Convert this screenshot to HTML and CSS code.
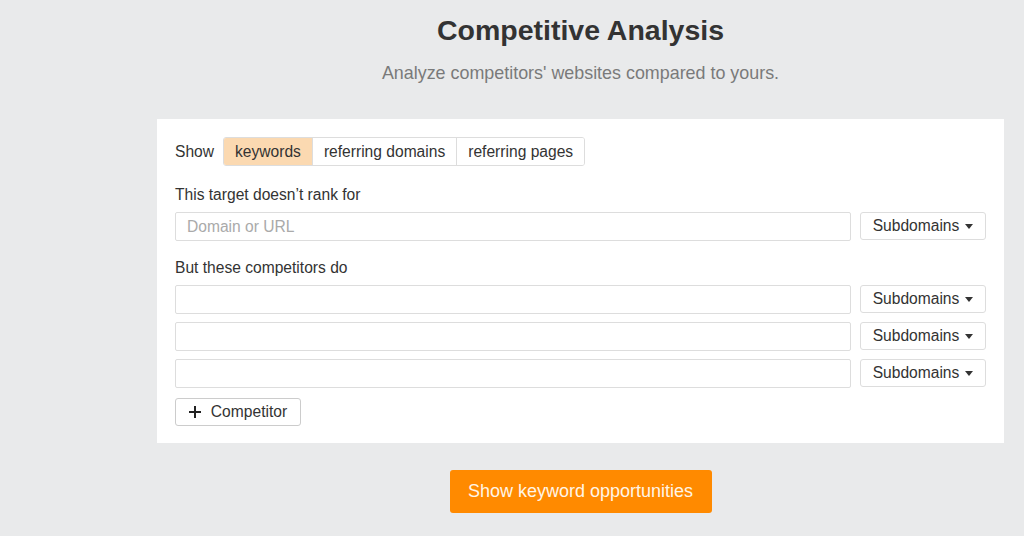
FILE: index.html
```html
<!DOCTYPE html>
<html lang="en">

<head>
    <meta charset="UTF-8">
    <meta name="viewport" content="width=device-width, initial-scale=1.0">
    <title>Competitive Analysis</title>
    <link rel="stylesheet" href="styles.css">
</head>

<body>
    <div class="main">
        <h1>Competitive Analysis</h1>
        <p class="sub">Analyze competitors' websites compared to yours.</p>

        <div class="panel">
            <div class="show-row">
                <span class="show-label">Show</span>
                <div class="tabs">
                    <button class="tab active">keywords</button>
                    <button class="tab">referring domains</button>
                    <button class="tab">referring pages</button>
                </div>
            </div>

            <div class="label">This target doesn’t rank for</div>
            <div class="row">
                <input type="text" class="field" placeholder="Domain or URL">
                <button class="select">Subdomains <span class="caret"></span></button>
            </div>

            <div class="label second">But these competitors do</div>
            <div class="row">
                <input type="text" class="field">
                <button class="select">Subdomains <span class="caret"></span></button>
            </div>
            <div class="row">
                <input type="text" class="field">
                <button class="select">Subdomains <span class="caret"></span></button>
            </div>
            <div class="row">
                <input type="text" class="field">
                <button class="select">Subdomains <span class="caret"></span></button>
            </div>

            <button class="add">
                <svg width="12" height="12" viewBox="0 0 12 12">
                    <path d="M6 0v12M0 6h12" stroke="#222" stroke-width="2" />
                </svg>
                Competitor
            </button>
        </div>

        <div class="submit-area">
            <button class="submit">Show keyword opportunities</button>
        </div>
    </div>
</body>

</html>
```

FILE: styles.css
```css
* {
    box-sizing: border-box;
}

body {
    margin: 0;
    padding: 0;
    height: 100vh;
    background-color: #e9eaeb;
    font-family: "Liberation Sans", Arial, sans-serif;
    color: #333;
    overflow: hidden;
}

.main {
    margin-left: 157px;
    width: 847px;
}

h1 {
    margin: 0;
    padding-top: 14px;
    text-align: center;
    font-size: 28.5px;
    font-weight: bold;
    color: #333;
    line-height: 32px;
}

.sub {
    margin: 16px 0 0;
    text-align: center;
    font-size: 17.9px;
    color: #7a7a7a;
    line-height: 22px;
}

.panel {
    margin-top: 35px;
    background-color: #fff;
    padding: 18px 18px 18px;
    height: 324px;
}

.show-row {
    display: flex;
    align-items: center;
}

.show-label {
    font-size: 15.6px;
    margin-right: 9px;
}

.tabs {
    display: flex;
    border: 1px solid #ddd;
    border-radius: 3px;
    height: 29px;
    overflow: hidden;
}

.tab {
    font-family: inherit;
    font-size: 15.6px;
    color: #333;
    background-color: #fff;
    border: none;
    border-left: 1px solid #ddd;
    padding: 0 11px;
    height: 100%;
}

.tab:first-child {
    border-left: none;
}

.tab.active {
    background-color: #fbd9b1;
}

.label {
    font-size: 15.6px;
    margin-top: 19px;
    height: 19px;
    line-height: 19px;
}

.label.second {
    margin-top: 17px;
}

.row {
    display: flex;
    margin-top: 8px;
    height: 29px;
}

.field {
    flex: 1;
    height: 29px;
    border: 1px solid #ddd;
    border-radius: 2px;
    padding: 0 11px;
    font-family: inherit;
    font-size: 15.6px;
    color: #333;
    outline: none;
}

.field::placeholder {
    color: #aaa;
}

.select {
    margin-left: 9px;
    width: 126px;
    height: 28px;
    border: 1px solid #ddd;
    border-radius: 3px;
    background-color: #fff;
    font-family: inherit;
    font-size: 15.6px;
    color: #333;
    display: flex;
    align-items: center;
    justify-content: center;
    gap: 6px;
}

.caret {
    width: 0;
    height: 0;
    border-left: 4px solid transparent;
    border-right: 4px solid transparent;
    border-top: 5px solid #333;
}

.add {
    margin-top: 10px;
    width: 126px;
    height: 28px;
    border: 1px solid #ccc;
    border-radius: 3px;
    background-color: #fff;
    font-family: inherit;
    font-size: 15.6px;
    color: #333;
    display: flex;
    align-items: center;
    justify-content: center;
    gap: 10px;
}

.submit-area {
    display: flex;
    justify-content: center;
    margin-top: 27px;
}

.submit {
    width: 262px;
    height: 43px;
    border: none;
    border-radius: 3px;
    background-color: #ff8a00;
    color: #fff5e6;
    font-family: inherit;
    font-size: 18px;
}
```
